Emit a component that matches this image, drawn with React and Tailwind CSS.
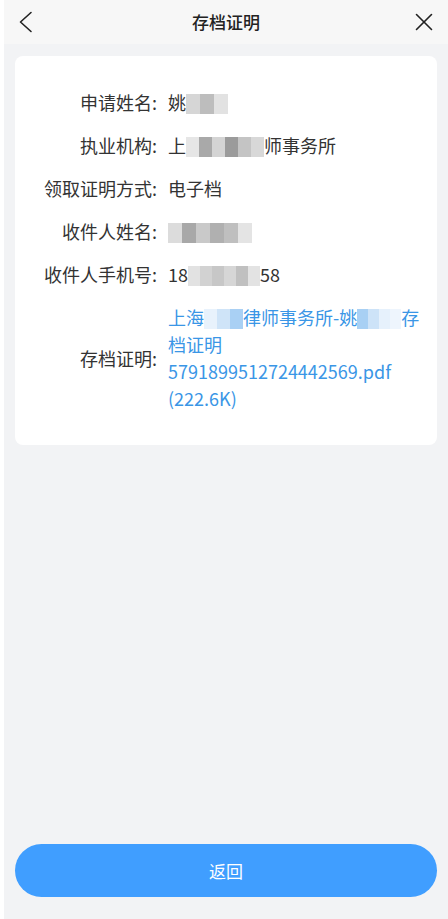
const font = { fontFamily: '"Noto Sans CJK SC", "Noto Sans", sans-serif' }

function Mosaic({ cells, w = 13 }) {
  // 马赛克遮挡块
  return (
    <span className="inline-flex align-middle h-[20px] -mt-[3px]">
      {cells.map((c, i) => (
        <span key={i} className={`inline-block h-[20px] ${c}`} style={{ width: w }} />
      ))}
    </span>
  )
}

function Row({ label, children }) {
  return (
    <div className="flex items-center py-2 leading-[27px]">
      <div className="w-[142px] shrink-0 text-right text-[#333]">{label}:</div>
      <div className="ml-[11px] flex-1 text-[#333] whitespace-nowrap">{children}</div>
    </div>
  )
}

export default function App() {
  return (
    <div className="w-full h-[919px] bg-white pl-1 text-[18px]" style={font}>
      <div className="h-full flex flex-col bg-[#f2f3f5]">
        <header className="h-11 bg-[#f7f7f7] flex items-center justify-between shrink-0 relative">
          <svg className="ml-[14px]" width="16" height="24" viewBox="0 0 16 24" fill="none" stroke="#222" strokeWidth="1.6" strokeLinecap="round" strokeLinejoin="round">
            <polyline points="13,2.5 2.5,12 13,21.5" />
          </svg>
          <h1 className="absolute left-0 right-0 text-center text-[17px] font-medium text-[#222] pointer-events-none">存档证明</h1>
          <svg className="mr-[14px]" width="20" height="20" viewBox="0 0 20 20" fill="none" stroke="#222" strokeWidth="1.6" strokeLinecap="round">
            <line x1="2.5" y1="2.5" x2="17.5" y2="17.5" />
            <line x1="17.5" y1="2.5" x2="2.5" y2="17.5" />
          </svg>
        </header>

        <div className="px-[11px] pt-3 flex-1 flex flex-col">
          <div className="bg-white rounded-lg pt-[25px] pb-[25px] pr-4">
            <Row label="申请姓名">
              姚<Mosaic w={14} cells={['bg-[#d6d6d6]', 'bg-[#bdbdbd]', 'bg-[#e2e2e2]']} />
            </Row>
            <Row label="执业机构">
              上<Mosaic cells={['bg-[#e6e6e6]', 'bg-[#a9a9a9]', 'bg-[#d4d4d4]', 'bg-[#9b9b9b]', 'bg-[#c4c4c4]', 'bg-[#d8d8d8]']} />师事务所
            </Row>
            <Row label="领取证明方式">电子档</Row>
            <Row label="收件人姓名">
              <Mosaic w={14} cells={['bg-[#dcdcdc]', 'bg-[#a8a8a8]', 'bg-[#c9c9c9]', 'bg-[#b0b0b0]', 'bg-[#bfbfbf]', 'bg-[#e4e4e4]']} />
            </Row>
            <Row label="收件人手机号">
              18<Mosaic w={12} cells={['bg-[#e2e2e2]', 'bg-[#d2d2d2]', 'bg-[#c7c7c7]', 'bg-[#d6d6d6]', 'bg-[#c0c0c0]', 'bg-[#e3e3e3]']} />58
            </Row>
            <Row label="存档证明">
              <div className="text-[#3a96e6]">
                上海<Mosaic cells={['bg-[#e8f2fc]', 'bg-[#cfe4f8]', 'bg-[#a9d0f4]']} />律师事务所-姚<Mosaic w={11} cells={['bg-[#a8d0f4]', 'bg-[#cde3f8]', 'bg-[#e6f1fc]', 'bg-[#eef5fd]']} />存
                <br />
                档证明
                <br />
                5791899512724442569.pdf
                <br />
                (222.6K)
              </div>
            </Row>
          </div>

          <div className="flex-1" />

          <button className="mb-[22px] h-[53px] w-full rounded-full bg-[#409eff] text-white text-[17px]">
            返回
          </button>
        </div>
      </div>
    </div>
  )
}
